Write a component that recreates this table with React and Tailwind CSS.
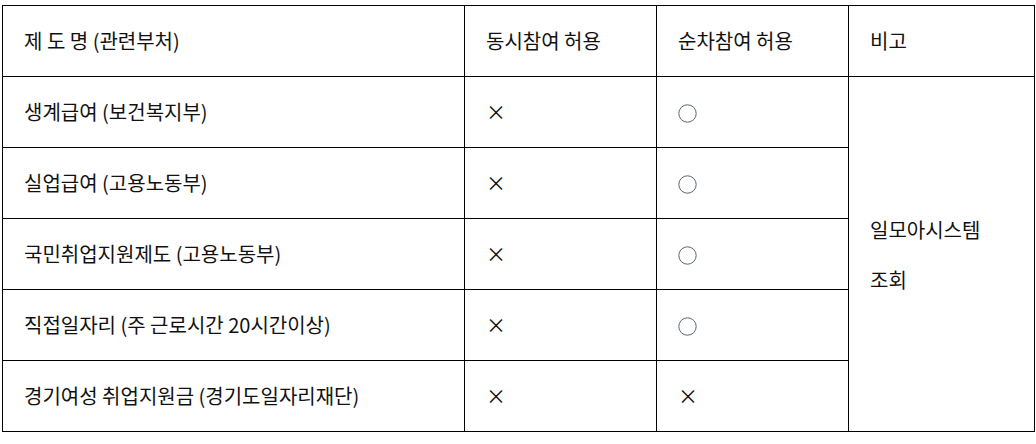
import React from "react";

const rows = [
  { name: "생계급여 (보건복지부)", sim: "×", seq: "○" },
  { name: "실업급여 (고용노동부)", sim: "×", seq: "○" },
  { name: "국민취업지원제도 (고용노동부)", sim: "×", seq: "○" },
  { name: "직접일자리 (주 근로시간 20시간이상)", sim: "×", seq: "○" },
  { name: "경기여성 취업지원금 (경기도일자리재단)", sim: "×", seq: "×" },
];

const cell = "border border-black px-[21px] align-middle text-left";

export default function App() {
  return (
    <div className="bg-white w-[1036px] h-[444px] pt-[5px] pl-[2px] text-[20px] text-[#111] font-['Noto_Sans_CJK_KR','Noto_Sans',sans-serif]">
      <table className="border-collapse table-fixed w-[1032px]">
        <colgroup>
          <col className="w-[462px]" />
          <col className="w-[192px]" />
          <col className="w-[192px]" />
          <col className="w-[186px]" />
        </colgroup>
        <thead>
          <tr className="h-[71px]">
            <th className={`${cell} font-normal`}>제 도 명 (관련부처)</th>
            <th className={`${cell} font-normal`}>동시참여 허용</th>
            <th className={`${cell} font-normal`}>순차참여 허용</th>
            <th className={`${cell} font-normal`}>비고</th>
          </tr>
        </thead>
        <tbody>
          {rows.map((r, i) => (
            <tr key={i} className="h-[71px]">
              <td className={cell}>{r.name}</td>
              <td className={cell}>{r.sim}</td>
              <td className={cell}>
                {r.seq === "○" ? (
                  <svg width="19" height="19" viewBox="0 0 19 19" className="block mt-[2px]">
                    <circle cx="9.5" cy="9.5" r="8.7" fill="none" stroke="#5a6470" strokeWidth="1" />
                  </svg>
                ) : (
                  r.seq
                )}
              </td>
              {i === 0 && (
                <td className={cell} rowSpan={5}>
                  <p className="leading-[26px] mb-[24px] mt-[2px]">일모아시스템</p>
                  <p className="leading-[26px]">조회</p>
                </td>
              )}
            </tr>
          ))}
        </tbody>
      </table>
    </div>
  );
}
